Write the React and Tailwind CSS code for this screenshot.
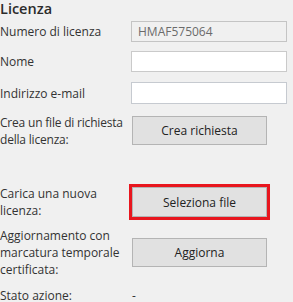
export default function App() {
  return (
    <div className="w-[293px] h-[302px] overflow-hidden bg-[#f0f0f0] text-[#333333] text-[12px] leading-[17px] font-['Open_Sans',sans-serif]">
      <div className="text-[14.5px] leading-[18px] font-semibold text-[#2b2b2b]">Licenza</div>
      <div className="flex items-center mt-[3px] h-[21px]">
        <div className="w-[131px] shrink-0">Numero di licenza</div>
        <div className="w-[156px] h-[21px] border border-[#c4c4c4] bg-[#f0f0f0] text-[#6b6b6b] px-[6px] flex items-center">HMAF575064</div>
      </div>
      <div className="flex items-center mt-[9px] h-[21px]">
        <div className="w-[131px] shrink-0">Nome</div>
        <div className="w-[156px] h-[21px] border border-[#cacaca] bg-white"></div>
      </div>
      <div className="flex items-center mt-[10px] h-[22px]">
        <div className="w-[131px] shrink-0">Indirizzo e-mail</div>
        <div className="w-[156px] h-[22px] border border-[#c6cad0] bg-white"></div>
      </div>
      <div className="flex items-center mt-[12px] h-[29px]">
        <div className="w-[132px] shrink-0 tracking-[-0.2px]">Crea un file di richiesta<br />della licenza:</div>
        <div className="w-[135px] h-[29px] border border-[#b4b4b4] bg-[#e1e1e1] text-[#222] flex items-center justify-center">Crea richiesta</div>
      </div>
      <div className="flex items-center mt-[42px] h-[30px]">
        <div className="w-[132px] shrink-0">Carica una nuova<br />licenza:</div>
        <div className="w-[135px] h-[30px] border border-[#b4b4b4] bg-[#e1e1e1] text-[#222] flex items-center justify-center ring-[3px] ring-[#e8161e]">Seleziona file</div>
      </div>
      <div className="flex items-center mt-[21px] h-[29px]">
        <div className="w-[132px] shrink-0">Aggiornamento con<br />marcatura temporale<br />certificata:</div>
        <div className="w-[135px] h-[29px] border border-[#b4b4b4] bg-[#e1e1e1] text-[#222] flex items-center justify-center">Aggiorna</div>
      </div>
      <div className="flex items-center mt-[20px]">
        <div className="w-[132px] shrink-0">Stato azione:</div>
        <div>-</div>
      </div>
    </div>
  );
}
